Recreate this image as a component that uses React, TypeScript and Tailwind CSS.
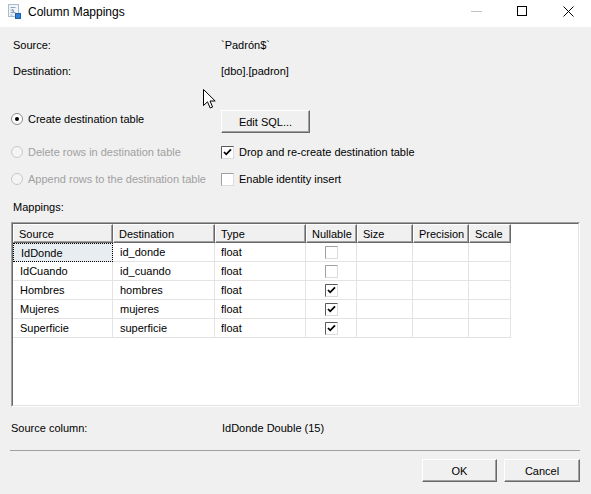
import React from "react";

function Radio({ checked, disabled }: { checked?: boolean; disabled?: boolean }) {
  return (
    <svg width="12" height="12" viewBox="0 0 12 12" className="shrink-0">
      <circle cx="6" cy="6" r="5.5" fill={disabled ? "#f4f4f4" : "#ffffff"} stroke={disabled ? "#c9c9c9" : "#8c8c8c"} />
      {checked && <circle cx="6" cy="6" r="2" fill="#000" />}
    </svg>
  );
}

function Check({ checked }: { checked?: boolean }) {
  return (
    <svg width="13" height="13" viewBox="0 0 13 13" className="shrink-0">
      <rect x="0.5" y="0.5" width="12" height="12" fill="#fff" stroke="#dcdcdc" />
      <path d="M0.5 12.5V0.5H12.5" stroke={checked ? "#5a5a5a" : "#a0a0a0"} fill="none" />
      {checked && <path d="M3 6 L5.2 8.3 L10 3.4" stroke="#000" strokeWidth="1.8" fill="none" />}
    </svg>
  );
}

function Btn({ children, w }: { children: React.ReactNode; w: string }) {
  return (
    <div
      className={`${w} h-[23px] flex items-center justify-center bg-[#f0f0f0] border border-t-white border-l-white border-r-[#696969] border-b-[#696969] shadow-[inset_-1px_-1px_0_#a0a0a0] text-black`}
    >
      {children}
    </div>
  );
}

const rows: [string, string, string, boolean][] = [
  ["IdDonde", "id_donde", "float", false],
  ["IdCuando", "id_cuando", "float", false],
  ["Hombres", "hombres", "float", true],
  ["Mujeres", "mujeres", "float", true],
  ["Superficie", "superficie", "float", true],
];

const cols = [
  { name: "Source", w: "w-[100px]" },
  { name: "Destination", w: "w-[102px]" },
  { name: "Type", w: "w-[91px]" },
  { name: "Nullable", w: "w-[51px]" },
  { name: "Size", w: "w-[56px]" },
  { name: "Precision", w: "w-[56px]" },
  { name: "Scale", w: "w-[42px]" },
];

export default function App() {
  return (
    <div className="relative w-[591px] h-[494px] bg-[#f0f0f0] overflow-hidden text-[11px] leading-[14px] text-black font-['Liberation_Sans',Arial,sans-serif]">
      {/* Title bar */}
      <div className="flex h-[27px] bg-white items-start">
        <div className="ml-[7px] mt-[3px]">
          <svg width="15" height="16" viewBox="0 0 15 16">
            <rect x="1.5" y="1.5" width="10" height="12" fill="#f1f5fa" stroke="#a9bbcf" />
            <path d="M3.5 4.5h5M3.5 7h3M3.5 9.5h5M3.5 12h2" stroke="#8fa4bb" />
            <path d="M5 6.5l2 1.5-2 1.5" stroke="#7d93ad" fill="none" />
            <rect x="8.5" y="10.5" width="5" height="5" fill="#2f7fd6" stroke="#1c5ea8" />
          </svg>
        </div>
        <div className="ml-[6px] mt-[5px] text-[12px] leading-[14px]">Column Mappings</div>
        <div className="flex-1" />
        <div className="w-[46px] h-[27px] flex justify-center">
          <div className="w-[11px] h-px bg-[#c3c3c3] mt-[11px]" />
        </div>
        <div className="w-[46px] h-[27px] flex justify-center">
          <div className="w-[10px] h-[10px] border border-black mt-[6px]" />
        </div>
        <div className="w-[46px] h-[27px] flex justify-center">
          <svg width="11" height="11" viewBox="0 0 11 11" className="mt-[6px]">
            <path d="M0.5 0.5L10.5 10.5M10.5 0.5L0.5 10.5" stroke="#000" strokeWidth="1" />
          </svg>
        </div>
      </div>

      {/* Body */}
      <div className="flex flex-col px-[11px]">
        <div className="mt-[11px] h-[14px] flex items-center">
          <div className="w-[210px] pl-[2px]">Source:</div>
          <div>`Padrón$`</div>
        </div>
        <div className="mt-[12px] h-[14px] flex items-center">
          <div className="w-[210px] pl-[2px]">Destination:</div>
          <div>[dbo].[padron]</div>
        </div>

        <div className="mt-[32px] h-[23px] flex items-start">
          <div className="w-[210px] h-[18px] flex items-center">
            <Radio checked />
            <span className="ml-[5px]">Create destination table</span>
          </div>
          <Btn w="w-[89px]">Edit SQL...</Btn>
        </div>
        <div className="mt-[12px] h-[14px] flex items-center">
          <div className="w-[210px] flex items-center">
            <Radio disabled />
            <span className="ml-[5px] text-[#a0a0a0]">Delete rows in destination table</span>
          </div>
          <Check checked />
          <span className="ml-[5px]">Drop and re-create destination table</span>
        </div>
        <div className="mt-[13px] h-[14px] flex items-center">
          <div className="w-[210px] flex items-center">
            <Radio disabled />
            <span className="ml-[5px] text-[#a0a0a0]">Append rows to the destination table</span>
          </div>
          <Check />
          <span className="ml-[5px]">Enable identity insert</span>
        </div>

        <div className="mt-[14px] h-[14px] pl-[2px]">Mappings:</div>

        {/* Table */}
        <div className="mt-[8px] h-[185px] border border-t-[#a0a0a0] border-l-[#a0a0a0] border-r-white border-b-white">
          <div className="h-full bg-white border border-t-[#696969] border-l-[#696969] border-r-[#e3e3e3] border-b-[#e3e3e3]">
            <div className="flex h-[19px]">
              {cols.map((c) => (
                <div
                  key={c.name}
                  className={`${c.w} h-[19px] bg-[#f0f0f0] border-t border-l border-t-white border-l-white border-r border-b border-r-[#696969] border-b-[#696969] shadow-[inset_-1px_-1px_0_#a0a0a0] pl-[5px] flex items-center`}
                >
                  {c.name}
                </div>
              ))}
            </div>
            {rows.map((r, i) => (
              <div key={r[0]} className="flex h-[19px]">
                <div
                  className={`w-[100px] h-[19px] pl-[7px] flex items-center ${
                    i === 0
                      ? "bg-[#e8edf2] border border-dotted border-black"
                      : "border-r border-b border-[#e3e3e3]"
                  }`}
                >
                  {r[0]}
                </div>
                <div className="w-[102px] h-[19px] pl-[7px] flex items-center border-r border-b border-[#e3e3e3]">{r[1]}</div>
                <div className="w-[91px] h-[19px] pl-[6px] flex items-center border-r border-b border-[#e3e3e3]">{r[2]}</div>
                <div className="w-[51px] h-[19px] flex items-center justify-center border-r border-b border-[#e3e3e3]">
                  <Check checked={r[3]} />
                </div>
                <div className="w-[56px] h-[19px] border-r border-b border-[#e3e3e3]" />
                <div className="w-[56px] h-[19px] border-r border-b border-[#e3e3e3]" />
                <div className="w-[42px] h-[19px] border-r border-b border-[#e3e3e3]" />
              </div>
            ))}
          </div>
        </div>

        <div className="mt-[14px] h-[14px] flex items-center">
          <div className="w-[211px]">Source column:</div>
          <div>IdDonde Double (15)</div>
        </div>

        <div className="mt-[15px] h-px bg-[#a0a0a0] -ml-px" />

        <div className="mt-[8px] flex justify-end gap-[7px]">
          <Btn w="w-[75px]">OK</Btn>
          <Btn w="w-[76px]">Cancel</Btn>
        </div>
      </div>

      {/* Mouse cursor */}
      <svg width="14" height="21" viewBox="0 0 14 21" className="absolute left-[203px] top-[89px]">
        <path d="M0.5 0.5 L0.5 16.5 L4.5 12.8 L7.2 19 L9.6 18 L7 12 L12.2 12 Z" fill="#fff" stroke="#000" strokeWidth="1" strokeLinejoin="miter" />
      </svg>
    </div>
  );
}
